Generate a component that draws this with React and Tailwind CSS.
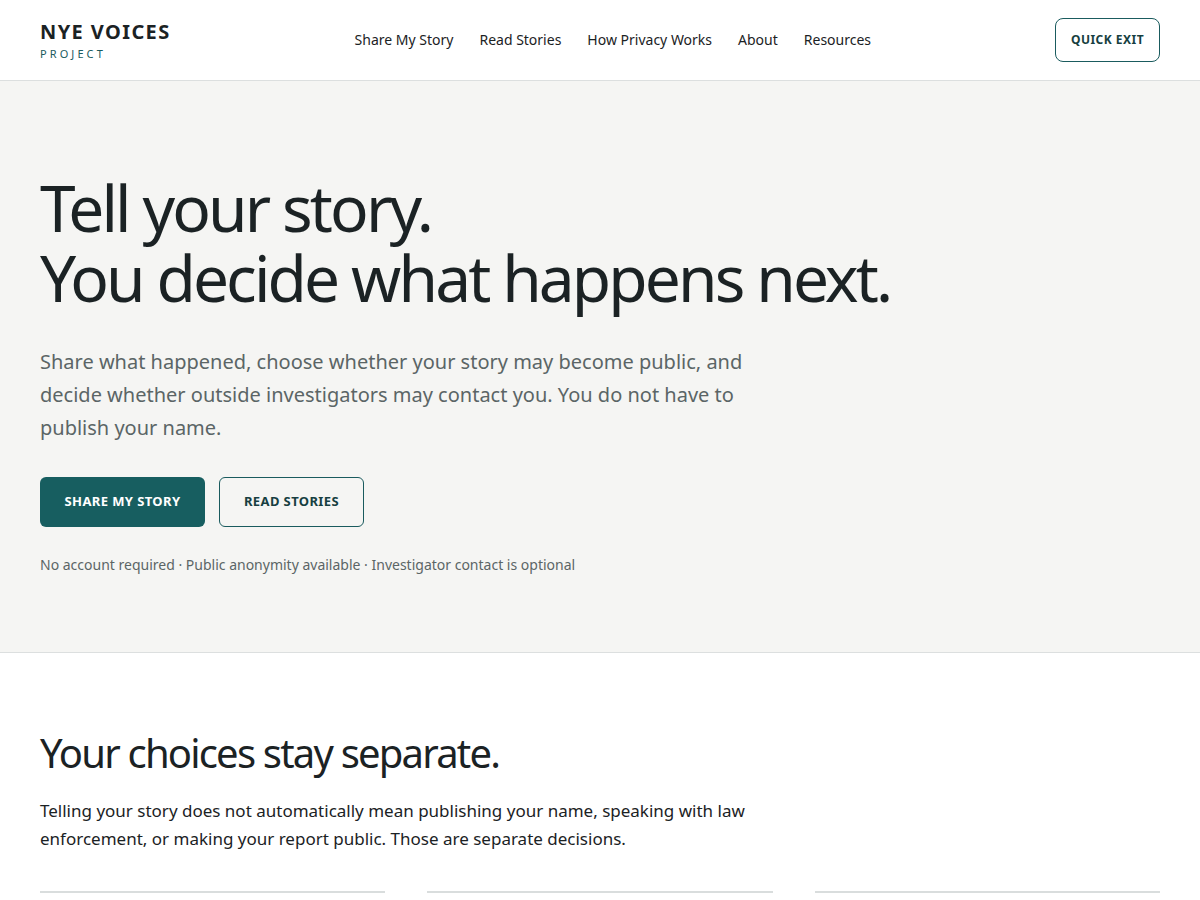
import React from "react";

const font = { fontFamily: '"Noto Sans", "Open Sans", Arial, sans-serif' };

export default function App() {
  return (
    <div style={font} className="min-h-[900px] bg-white text-[#1b2224]">
      <header className="h-[81px] border-b border-[#dcdfdf] bg-white px-10 flex items-center justify-between">
        <div className="flex flex-col">
          <span className="text-[20px] font-bold tracking-[0.07em] leading-[24px] text-[#1b2224]">NYE VOICES</span>
          <span className="text-[11px] tracking-[0.28em] leading-[14px] mt-[3px] text-[#1a5b5e]">PROJECT</span>
        </div>
        <nav className="flex items-center gap-[26px] text-[14px] text-[#1b2224] -mt-[2px]">
          <a>Share My Story</a>
          <a>Read Stories</a>
          <a>How Privacy Works</a>
          <a>About</a>
          <a>Resources</a>
        </nav>
        <button className="h-[44px] w-[105px] rounded-[8px] border border-[#1a5b5e] text-[12px] font-bold tracking-[0.04em] text-[#173f41]">
          QUICK EXIT
        </button>
      </header>

      <section className="bg-[#f5f5f3] border-b border-[#dcdfdf] h-[572px] px-10 pt-[92px]">
        <h1 className="text-[64px] leading-[70px] tracking-[-0.045em] text-[#1b2224]">
          Tell your story.
          <br />
          You decide what happens next.
        </h1>
        <p className="mt-[32px] max-w-[720px] text-[20px] leading-[33px] text-[#5b6566]">
          Share what happened, choose whether your story may become public, and decide whether outside investigators may contact you. You do not have to publish your name.
        </p>
        <div className="mt-[33px] flex gap-[14px]">
          <button className="h-[50px] w-[165px] rounded-[6px] bg-[#175e60] text-white text-[13px] font-bold tracking-[0.03em]">
            SHARE MY STORY
          </button>
          <button className="h-[50px] w-[145px] rounded-[6px] border border-[#1a5b5e] text-[#173f41] text-[13px] font-bold tracking-[0.03em]">
            READ STORIES
          </button>
        </div>
        <p className="mt-[27px] text-[14px] text-[#5b6566]">
          No account required · Public anonymity available · Investigator contact is optional
        </p>
      </section>

      <section className="px-10 pt-[76px]">
        <h2 className="text-[40px] leading-[48px] tracking-[-0.045em] text-[#1b2224]">Your choices stay separate.</h2>
        <p className="mt-[20px] max-w-[720px] text-[17px] leading-[28px] text-[#1b2224]">
          Telling your story does not automatically mean publishing your name, speaking with law enforcement, or making your report public. Those are separate decisions.
        </p>
        <div className="mt-[38px] grid grid-cols-3 gap-[42px]">
          <div className="border-t-2 border-[#d9dddd] h-[40px]"></div>
          <div className="border-t-2 border-[#d9dddd] h-[40px]"></div>
          <div className="border-t-2 border-[#d9dddd] h-[40px]"></div>
        </div>
      </section>
    </div>
  );
}
